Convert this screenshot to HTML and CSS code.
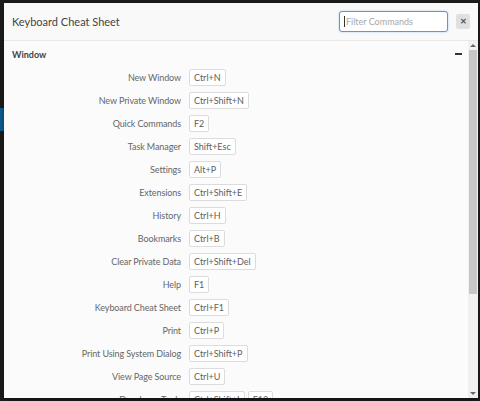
FILE: index.html
```html
<!DOCTYPE html>
<html lang="en">
<head>
  <meta charset="UTF-8" />
  <title>Keyboard Cheat Sheet</title>
  <link rel="stylesheet" href="styles.css">
</head>
<body>

<div class="dialog">
  <div class="dialog-head">
    <h1>Keyboard Cheat Sheet</h1>
    <label class="filter-wrap">
      <input class="filter" type="text" placeholder="Filter Commands">
    </label>
    <button class="close">&#x2715;</button>
  </div>

  <div class="dialog-body">
    <div class="list">
      <div class="section-title">
        <span>Window</span>
        <span class="collapse"></span>
      </div>

      <div class="row"><span class="cmd">New Window</span><span class="keys"><kbd>Ctrl+N</kbd></span></div>
      <div class="row"><span class="cmd">New Private Window</span><span class="keys"><kbd>Ctrl+Shift+N</kbd></span></div>
      <div class="row"><span class="cmd">Quick Commands</span><span class="keys"><kbd>F2</kbd></span></div>
      <div class="row"><span class="cmd">Task Manager</span><span class="keys"><kbd>Shift+Esc</kbd></span></div>
      <div class="row"><span class="cmd">Settings</span><span class="keys"><kbd>Alt+P</kbd></span></div>
      <div class="row"><span class="cmd">Extensions</span><span class="keys"><kbd>Ctrl+Shift+E</kbd></span></div>
      <div class="row"><span class="cmd">History</span><span class="keys"><kbd>Ctrl+H</kbd></span></div>
      <div class="row"><span class="cmd">Bookmarks</span><span class="keys"><kbd>Ctrl+B</kbd></span></div>
      <div class="row"><span class="cmd">Clear Private Data</span><span class="keys"><kbd>Ctrl+Shift+Del</kbd></span></div>
      <div class="row"><span class="cmd">Help</span><span class="keys"><kbd>F1</kbd></span></div>
      <div class="row"><span class="cmd">Keyboard Cheat Sheet</span><span class="keys"><kbd>Ctrl+F1</kbd></span></div>
      <div class="row"><span class="cmd">Print</span><span class="keys"><kbd>Ctrl+P</kbd></span></div>
      <div class="row"><span class="cmd">Print Using System Dialog</span><span class="keys"><kbd>Ctrl+Shift+P</kbd></span></div>
      <div class="row"><span class="cmd">View Page Source</span><span class="keys"><kbd>Ctrl+U</kbd></span></div>
      <div class="row"><span class="cmd">Developer Tools</span><span class="keys"><kbd>Ctrl+Shift+I</kbd><kbd>F12</kbd></span></div>
    </div>

    <!-- fake scrollbar -->
    <div class="scrollbar">
      <span class="arrow up"></span>
      <div class="track"><div class="thumb"></div></div>
      <span class="arrow down"></span>
    </div>
  </div>
</div>

</body>
</html>
```

FILE: styles.css
```css
:root {
  --bg: #1c1c1c; --dialog: #fbfbfb; --line: #e8e8e8;
  --text: #444; --sub: #666; --accent: #5b98d8; --key: #dcdcdc;
}
body {
  margin: 0; height: 401px; overflow: hidden;
  background: linear-gradient(#0d5f91, #0d5f91) 0 108px / 4px 23px no-repeat, var(--bg);
  font-family: Lato, "Noto Sans", sans-serif;
}
.dialog {
  margin: 3px 2px 0 4px; height: 395px;
  background: var(--dialog); display: flex; flex-direction: column;
  box-shadow: 0 2px 6px #0006;
}
.dialog-head {
  height: 37px; flex: none; display: flex; align-items: center;
  padding: 0 8px; border-bottom: 1px solid var(--line); background: #f9f9f9;
}
h1 { margin: 0; flex: 1; font-size: 11px; font-weight: normal; color: var(--text); }
.filter-wrap { position: relative; display: flex; margin-right: 8px; }
.filter-wrap::before {
  content: ""; position: absolute; left: 5px; top: 5px; width: 1px; height: 11px; background: #333;
}
.filter {
  width: 109px; height: 21px; box-sizing: border-box; margin: 0;
  border: 1px solid var(--accent); border-radius: 3px; padding: 0 6px; outline: none;
  box-shadow: 0 0 2px #5b98d880;
  font: 9px Lato, sans-serif; color: #333; background: #fff;
}
.filter::placeholder { color: #a8a8a8; }
.close {
  width: 14px; height: 15px; padding: 0; border: none; border-radius: 2px;
  background: #e0e0e0; color: #555; font-size: 8px; font-weight: bold; line-height: 15px;
}
.dialog-body { flex: 1; display: flex; min-height: 0; }
.list { flex: 1; padding: 6px 4px 0 8px; overflow: hidden; }
.section-title {
  display: flex; justify-content: space-between; align-items: center;
  font-size: 9px; font-weight: bold; color: #444; height: 14px; margin-bottom: 8px;
}
.collapse { width: 7px; height: 2px; background: #333; margin-right: 2px; }
.row {
  display: grid; grid-template-columns: 169px 1fr; column-gap: 8px;
  align-items: center; height: 17px; margin-bottom: 6px;
}
.cmd { text-align: right; font-size: 9px; letter-spacing: -0.1px; color: var(--sub); white-space: nowrap; }
.keys { display: flex; gap: 3px; }
kbd {
  font: 9px Lato, sans-serif; color: #5e5e5e; background: #fff;
  border: 1px solid var(--key); border-radius: 2px; padding: 0 4px;
  height: 17px; box-sizing: border-box; display: inline-flex; align-items: center;
}
.scrollbar { width: 10px; flex: none; display: flex; flex-direction: column; background: #f0f0f0; }
.track { flex: 1; padding: 0 1px; }
.thumb { height: 244px; background: #c6c6c6; }
.arrow { height: 9px; flex: none; display: flex; justify-content: center; align-items: center; }
.arrow::before { content: ""; border: 3px solid transparent; }
.arrow.up::before { border-bottom-color: #666; border-top: 0; }
.arrow.down::before { border-top-color: #666; border-bottom: 0; }
```
